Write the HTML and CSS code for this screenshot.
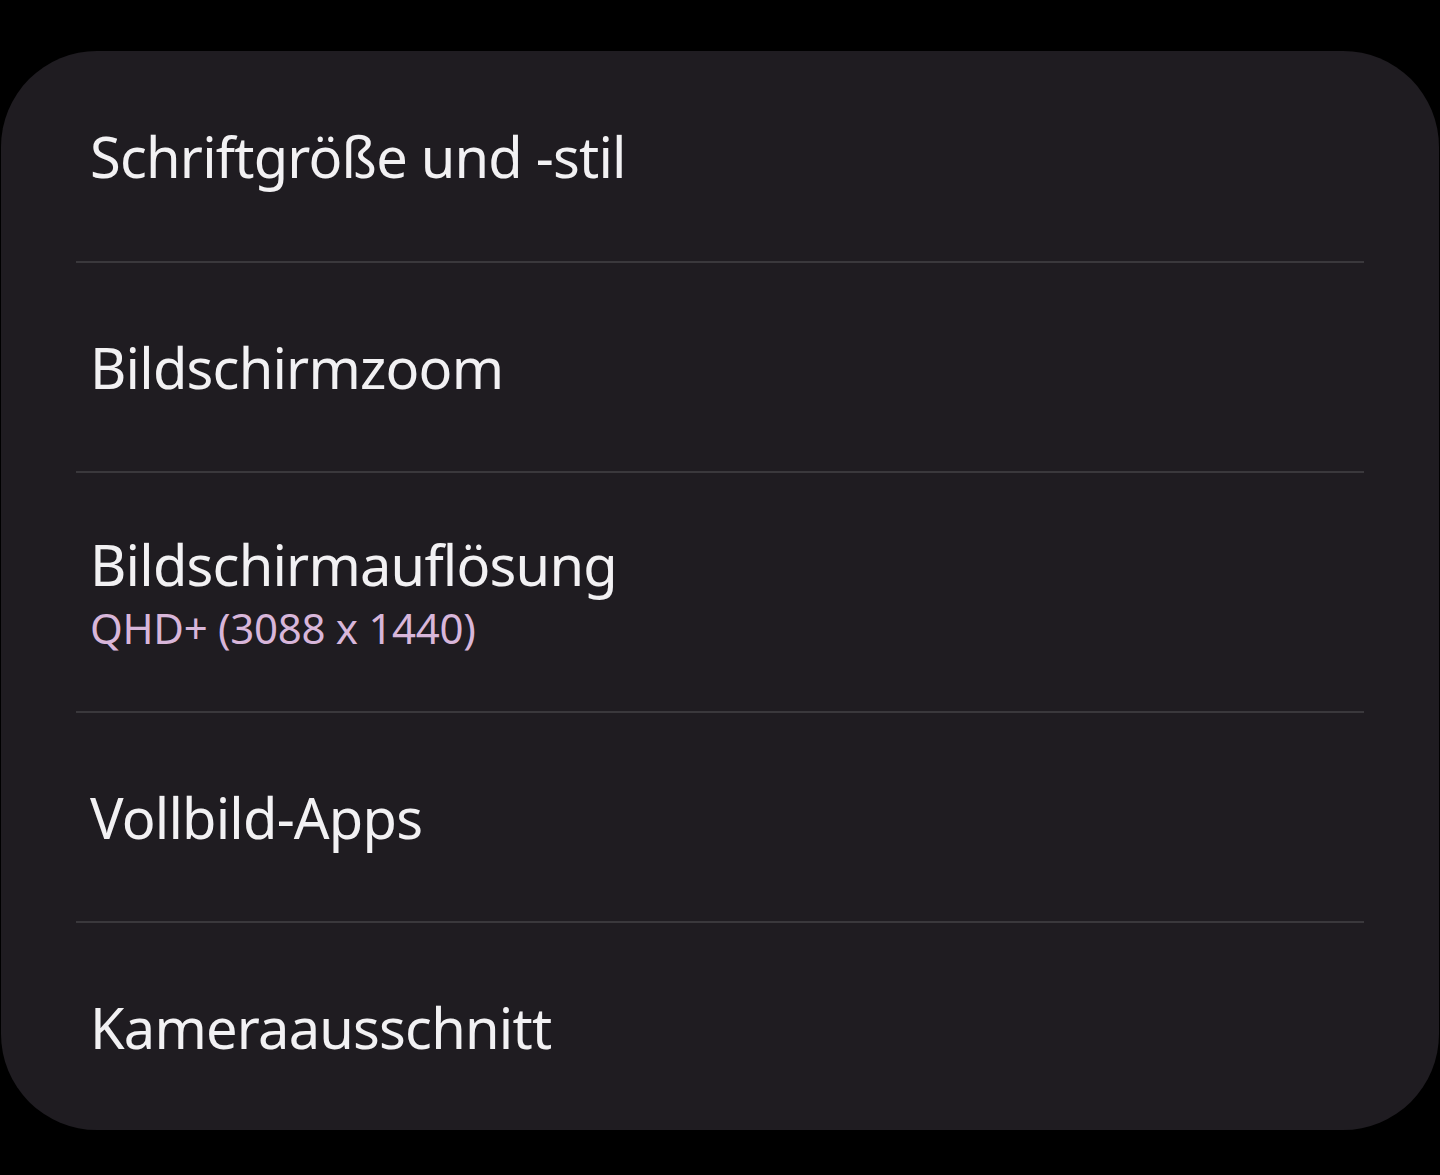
FILE: index.html
```html
<!doctype html>
<html lang="de">
    <head>
        <meta charset="UTF-8" />
        <meta name="viewport" content="width=device-width, initial-scale=1.0" />
        <title>Anzeige</title>
        <link rel="stylesheet" href="styles.css">
    </head>
    <body>
        <div class="card">
            <div class="item item-first">
                <span class="title">Schriftgröße und -stil</span>
            </div>
            <div class="divider"></div>
            <div class="item">
                <span class="title">Bildschirmzoom</span>
            </div>
            <div class="divider"></div>
            <div class="item item-tall">
                <span class="title">Bildschirmauflösung</span>
                <span class="summary">QHD+ (3088 x 1440)</span>
            </div>
            <div class="divider"></div>
            <div class="item">
                <span class="title">Vollbild-Apps</span>
            </div>
            <div class="divider"></div>
            <div class="item item-last">
                <span class="title">Kameraausschnitt</span>
            </div>
        </div>
    </body>
</html>
```

FILE: styles.css
```css
body {
    margin: 0;
    background-color: #000;
    font-family: "Noto Sans", "Open Sans", sans-serif;
    height: 1175px;
    overflow: hidden;
}
.card {
    margin-top: 51px;
    margin-left: 1px;
    margin-right: 1px;
    background-color: #1f1c21;
    border-radius: 96px;
}
.item {
    height: 208px;
    padding-left: 89px;
    display: flex;
    flex-direction: column;
    justify-content: center;
}
.item-first {
    height: 210px;
}
.item-tall {
    height: 238px;
}
.item-last {
    height: 207px;
}
.title {
    color: #f2f1f3;
    font-size: 56px;
    line-height: 72px;
    letter-spacing: -0.8px;
}
.summary {
    color: #d8b6da; /* lilac summary text */
    font-size: 42px;
    line-height: 56px;
    letter-spacing: -0.3px;
}
.divider {
    height: 2px;
    margin: 0 75px;
    background-color: #3a383c;
}
```
